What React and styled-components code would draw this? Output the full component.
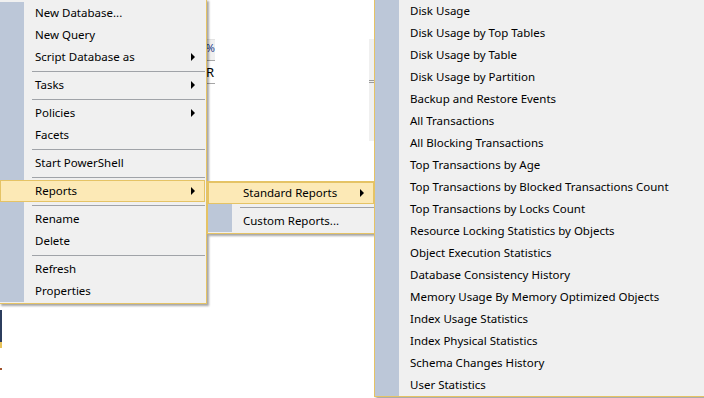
import React from "react";
import styled, { createGlobalStyle } from "styled-components";

const GlobalStyle = createGlobalStyle`
  html, body { margin: 0; padding: 0; background: #ffffff; }
  body { width: 704px; height: 398px; overflow: hidden; font-family: "Noto Sans", "Liberation Sans", sans-serif; }
  #root { width: 704px; height: 398px; }
`;

const Screen = styled.div`
  position: relative;
  width: 704px;
  height: 398px;
  overflow: hidden;
  background: #ffffff;
`;

const Backdrop = styled.div`
  display: flex;
  width: 100%;
  height: 100%;
`;

const EdgeStrip = styled.div`
  display: flex;
  flex-direction: column;
  width: 2px;
  padding-top: 310px;
`;

const EdgeSeg = styled.div`
  height: ${(p) => p.$h}px;
  background: ${(p) => p.$c};
`;

const PanelArea = styled.div`
  display: flex;
  flex: 1;
  padding: 39px 0 0 148px;
  align-items: flex-start;
`;

const Grid = styled.div`
  display: flex;
  width: 224px;
  height: 61px;
  font-family: "Noto Sans", sans-serif;
  font-size: 13px;
  color: #000;
`;

const GridColumn = styled.div`
  display: flex;
  flex-direction: column;
  width: ${(p) => p.$w}px;
`;

const HeaderCell = styled.div`
  height: 20px;
  border-top: 1px solid #e3e3e3;
  border-bottom: 1px solid #a6a6a6;
  background: ${(p) => (p.$shaded ? "#f0f0f0" : "#ffffff")};
  display: flex;
  align-items: flex-start;
  justify-content: flex-end;
  line-height: 16px;
  font-size: 11px;
  color: #1a3a8a;
  overflow: hidden;
`;

const DataCell = styled.div`
  height: 22px;
  border-bottom: 1px solid #a6a6a6;
  display: flex;
  align-items: center;
  justify-content: flex-end;
  padding-right: 1px;
  line-height: 18px;
  overflow: hidden;
`;

const ScrollTrack = styled.div`
  width: 5px;
  height: 61px;
  margin-left: auto;
  background: #f0f0f0;
  display: flex;
  flex-direction: column;
  padding-top: 41px;
  gap: 1px;
`;

const ScrollMark = styled.div`
  height: 1px;
  background: #9a9a9a;
`;

const Menu = styled.div`
  position: absolute;
  left: ${(p) => p.$left}px;
  top: ${(p) => p.$top}px;
  width: ${(p) => p.$width}px;
  box-sizing: border-box;
  border: 1px solid #e5c365;
  background: #f0f0f0;
  padding: ${(p) => p.$pad};
  box-shadow: 2px 2px 2px rgba(0, 0, 0, 0.35);
  font-family: "Noto Sans", "Liberation Sans", sans-serif;
  font-size: 11.5px;
  color: #000;
`;

const MenuList = styled.div`
  display: flex;
  flex-direction: column;
  background: linear-gradient(to right, #bcc7d8 0, #bcc7d8 24px, #f0f0f0 24px);
`;

const Item = styled.div`
  display: flex;
  align-items: center;
  height: 22px;
  box-sizing: border-box;
  padding-left: ${(p) => (p.$active ? 34 : 35)}px;
  padding-bottom: 1px;
  white-space: nowrap;
  ${(p) =>
    p.$active &&
    `
    background: #fce9b6;
    border: 1px solid #e5c365;
  `}
`;

const Arrow = styled.span`
  margin-left: auto;
  margin-right: ${(p) => (p.$active ? 9 : 10)}px;
  width: 0;
  height: 0;
  border-top: 4px solid transparent;
  border-bottom: 4px solid transparent;
  border-left: 4px solid #000;
`;

const Separator = styled.div`
  height: 6px;
  display: flex;
  align-items: center;
  padding-left: 32px;
`;

const SepLine = styled.div`
  flex: 1;
  height: 1px;
  background: #a0a3a8;
`;

const SEP = "sep";

const contextItems = [
  { label: "New Database..." },
  { label: "New Query" },
  { label: "Script Database as", sub: true },
  SEP,
  { label: "Tasks", sub: true },
  SEP,
  { label: "Policies", sub: true },
  { label: "Facets" },
  SEP,
  { label: "Start PowerShell" },
  SEP,
  { label: "Reports", sub: true, active: true },
  SEP,
  { label: "Rename" },
  { label: "Delete" },
  SEP,
  { label: "Refresh" },
  { label: "Properties" },
];

const reportItems = [
  { label: "Standard Reports", sub: true, active: true },
  SEP,
  { label: "Custom Reports..." },
];

const standardItems = [
  "Disk Usage",
  "Disk Usage by Top Tables",
  "Disk Usage by Table",
  "Disk Usage by Partition",
  "Backup and Restore Events",
  "All Transactions",
  "All Blocking Transactions",
  "Top Transactions by Age",
  "Top Transactions by Blocked Transactions Count",
  "Top Transactions by Locks Count",
  "Resource Locking Statistics by Objects",
  "Object Execution Statistics",
  "Database Consistency History",
  "Memory Usage By Memory Optimized Objects",
  "Index Usage Statistics",
  "Index Physical Statistics",
  "Schema Changes History",
  "User Statistics",
].map((label) => ({ label }));

function MenuItems({ items }) {
  return (
    <MenuList>
      {items.map((it, i) =>
        it === SEP ? (
          <Separator key={i}>
            <SepLine />
          </Separator>
        ) : (
          <Item key={i} $active={it.active}>
            {it.label}
            {it.sub && <Arrow $active={it.active} />}
          </Item>
        )
      )}
    </MenuList>
  );
}

export default function App() {
  return (
    <>
      <GlobalStyle />
      <Screen>
        <Backdrop>
          <EdgeStrip>
            <EdgeSeg $h={32} $c="#2c3d5e" />
            <EdgeSeg $h={6} $c="#e8c35a" />
            <EdgeSeg $h={20} $c="#ffffff" />
            <EdgeSeg $h={2} $c="#a0522d" />
          </EdgeStrip>
          <PanelArea>
            <Grid>
              <GridColumn $w={65}>
                <HeaderCell $shaded>%</HeaderCell>
                <DataCell>R</DataCell>
              </GridColumn>
              <ScrollTrack>
                <ScrollMark />
                <ScrollMark />
              </ScrollTrack>
            </Grid>
          </PanelArea>
        </Backdrop>

        <Menu $left={-1} $top={-1} $width={208} $pad="2px 1px 1px 0">
          <MenuItems items={contextItems} />
        </Menu>
        <Menu $left={207} $top={181} $width={168} $pad="0 0 1px 0">
          <MenuItems items={reportItems} />
        </Menu>
        <Menu $left={374} $top={-1} $width={340} $pad="0">
          <MenuItems items={standardItems} />
        </Menu>
      </Screen>
    </>
  );
}
